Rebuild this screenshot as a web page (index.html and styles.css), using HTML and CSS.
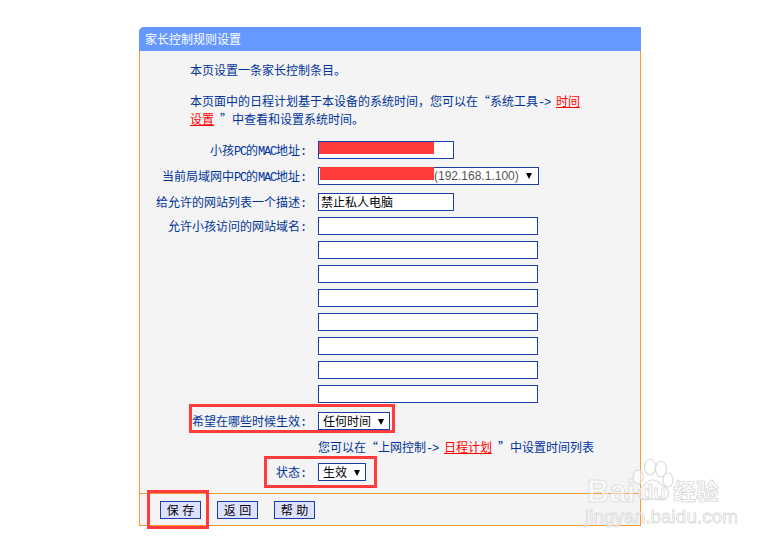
FILE: index.html
```html
<!DOCTYPE html>
<html lang="zh-CN">
<head>
    <meta charset="UTF-8">
    <title>家长控制规则设置</title>
    <link rel="stylesheet" href="styles.css">
</head>
<body>
    <div class="panel">
        <div class="panel-title">家长控制规则设置</div>
        <div class="panel-body">
            <p class="intro">本页设置一条家长控制条目。</p>
            <p class="intro">本页面中的日程计划基于本设备的系统时间，您可以在“系统工具<span class="en">-&gt; </span><a href="#" class="link">时间<br>设置</a><span class="en"> </span>”中查看和设置系统时间。</p>
            <div class="form">
                <label>小孩<span class="en">PC</span>的<span class="en">MAC</span>地址<span class="en">:</span></label>
                <div class="field"><span class="text-box short"><span class="mask"></span></span></div>

                <label>当前局域网中<span class="en">PC</span>的<span class="en">MAC</span>地址<span class="en">:</span></label>
                <div class="field">
                    <span class="select wide"><span class="mask mask-select"></span><span class="ip">(192.168.1.100)</span><span class="arrow"></span></span>
                </div>

                <label>给允许的网站列表一个描述<span class="en">:</span></label>
                <div class="field"><span class="text-box short">禁止私人电脑</span></div>

                <label>允许小孩访问的网站域名<span class="en">:</span></label>
                <div class="field"><span class="text-box long"></span></div>
                <div class="field col2"><span class="text-box long"></span></div>
                <div class="field col2"><span class="text-box long"></span></div>
                <div class="field col2"><span class="text-box long"></span></div>
                <div class="field col2"><span class="text-box long"></span></div>
                <div class="field col2"><span class="text-box long"></span></div>
                <div class="field col2"><span class="text-box long"></span></div>
                <div class="field col2"><span class="text-box long"></span></div>

                <label class="label-when">希望在哪些时候生效<span class="en">:</span></label>
                <div class="field field-when"><span class="select">任何时间<span class="arrow"></span></span></div>

                <div class="field col2 hint">您可以在“上网控制<span class="en">-&gt; </span><a href="#" class="link">日程计划</a><span class="en"> </span>”中设置时间列表</div>

                <label>状态<span class="en">:</span></label>
                <div class="field"><span class="select">生效<span class="arrow"></span></span></div>
            </div>
        </div>
        <div class="panel-foot">
            <button>保 存</button>
            <button>返 回</button>
            <button>帮 助</button>
        </div>

        <!-- red marks drawn over the screenshot -->
        <div class="mark mark-when"></div>
        <div class="mark mark-state"></div>
        <div class="mark mark-save"></div>
    </div>

    <div class="watermark">
        <svg class="paw" width="42" height="44" viewBox="0 0 42 44">
            <g fill="#fff" fill-opacity="0.5" stroke="#dcdcdc" stroke-width="1.2">
                <ellipse cx="6" cy="19" rx="5" ry="7"/>
                <ellipse cx="18" cy="9" rx="5.5" ry="8"/>
                <ellipse cx="29" cy="11" rx="5.5" ry="8"/>
                <ellipse cx="36" cy="22" rx="5" ry="7"/>
                <path d="M20 22c-5 0-7 5-11 8-5 4-3 12 5 12 3 0 4-1 7-1s5 1 8 1c8 0 9-8 5-12-4-3-8-8-14-8z"/>
            </g>
        </svg>
        <span class="wm-bai">Bai</span>
        <span class="wm-du">du</span>
        <span class="wm-cn">经验</span>
        <span class="wm-url">jingyan.baidu.com</span>
    </div>
</body>
</html>
```

FILE: styles.css
```css
html, body { margin: 0; padding: 0; }
body { width: 764px; height: 540px; overflow: hidden; background: #fff; font-family: "Noto Sans CJK SC", "Liberation Sans", sans-serif; font-size: 12px; color: #003399; position: relative; }

.panel { position: absolute; left: 139px; top: 27px; width: 502px; box-sizing: border-box; background: #f4f4f4; border: 1px solid #ff9933; border-top: none; border-radius: 5px 0 0 0; }
.panel-title { margin: 0 -1px; height: 24px; line-height: 24px; padding-left: 6px; background: #6699ff; color: #fff; border-radius: 5px 0 0 0; }
.panel-body { padding: 10px 45px 0 0; height: 442px; box-sizing: border-box; }
.intro { margin: 0 0 0 50px; line-height: 18px; padding-bottom: 13px; }
.en { font-family: "Liberation Mono", monospace; font-size: 12px; letter-spacing: -1.2px; line-height: 0; }
.link { color: #ff0000; text-decoration: underline; }

.form { display: grid; grid-template-columns: 167px 1fr; grid-template-rows: 26px 26px repeat(9, 24px) 27px 27px auto; column-gap: 11px; }
.form label { text-align: right; line-height: 18px; white-space: nowrap; padding-right: 1px; }
.label-when, .field-when { padding-top: 3px; }
.col2 { grid-column: 2; }
.hint { white-space: nowrap; line-height: 22px; }

.text-box, .select { display: block; box-sizing: border-box; height: 18px; border: 1px solid #1a3fa8; background: #fff; color: #000; line-height: 16px; padding-left: 2px; position: relative; }
.short { width: 136px; }
.long { width: 220px; }
.select { display: inline-block; padding-left: 4px; vertical-align: top; }
.wide { width: 221px; padding-left: 0; color: #555; font-family: "Liberation Sans", sans-serif; }
.mask { display: block; width: 115px; height: 12px; margin-left: -2px; background: #ff3b3b; }
.mask-select { position: absolute; left: 1px; top: -1px; width: 114px; height: 13px; margin-left: 0; }
.ip { margin-left: 115px; }
.arrow { display: inline-block; width: 0; height: 0; margin: 0 5px 1px 7px; border-top: 6px solid #000; border-left: 3px solid transparent; border-right: 3px solid transparent; vertical-align: middle; }

.panel-foot { border-top: 1px solid #ff9933; height: 32px; padding: 7px 0 0 20px; box-sizing: border-box; display: flex; align-items: flex-start; gap: 16px; }
button { width: 41px; height: 18px; padding: 0; box-sizing: border-box; background: #dde0ff; border: 1px solid #1a3fa8; color: #000; font: 12px/16px "Noto Sans CJK SC", sans-serif; word-spacing: 1px; }

.mark { position: absolute; border: 3px solid #ff3b3b; box-sizing: border-box; }
.mark-when { left: 49px; top: 377px; width: 206px; height: 29px; }
.mark-state { left: 124px; top: 429px; width: 113px; height: 32px; }
.mark-save { left: 7px; top: 463px; width: 62px; height: 39px; }

.watermark { position: absolute; left: 580px; top: 455px; width: 150px; height: 70px; filter: blur(0.5px); }
.paw { position: absolute; left: 52px; top: 3px; }
.watermark span { position: absolute; color: rgba(255, 255, 255, 0.5); -webkit-text-stroke: 1px #dedede; font-family: "Liberation Sans", sans-serif; font-weight: bold; white-space: nowrap; }
.watermark .wm-bai { left: 7px; top: 23px; font-size: 31px; line-height: 28px; }
.watermark .wm-du { left: 61px; top: 26px; font-size: 20px; }
.watermark .wm-cn { left: 93px; top: 24px; font-size: 23px; line-height: 1; font-family: "Noto Sans CJK SC", sans-serif; }
.watermark .wm-url { left: 5px; top: 52px; font-size: 19px; line-height: 19px; font-weight: normal; }
```
